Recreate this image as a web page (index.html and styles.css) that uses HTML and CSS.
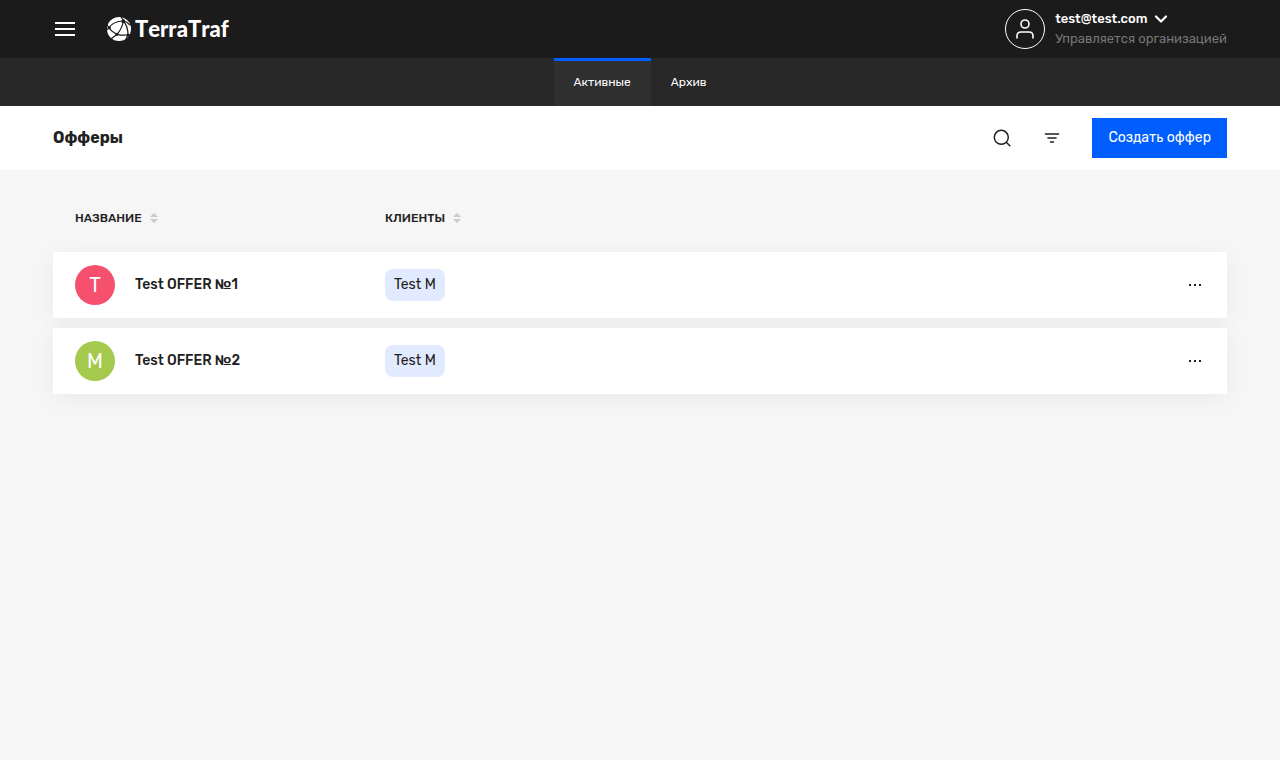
FILE: index.html
```html
<!DOCTYPE html>
<html lang="ru">
<head>
<meta charset="utf-8">
<meta name="viewport" content="width=device-width, initial-scale=1">
<title>Офферы — TerraTraf</title>
<link rel="stylesheet" href="styles.css">
</head>
<body>
<header class="topbar">
  <div class="brand">
    <button class="icon-btn" type="button" aria-label="Меню">
      <svg width="24" height="24" viewBox="0 0 24 24" fill="currentColor"><path d="M2 5h20v2H2zM2 11h20v2H2zM2 17h20v2H2z"/></svg>
    </button>
    <a class="logo" href="#">
      <svg width="24" height="24" viewBox="0 0 24 24" aria-hidden="true">
        <circle cx="12" cy="12" r="12" fill="#fff"/>
        <g fill="none" stroke="#1b1b1b" stroke-width="1.2">
          <path d="M14 0Q16 2 16.300 4Q6 4.500 2 10.500L0 13"/>
          <path d="M2 10.500Q4 14.500 10 17.300Q16 19 24 17.500"/>
          <path d="M2 10.500L0 8"/>
          <path d="M16.300 4Q15 12 10 17.300L4 22"/>
          <path d="M16.300 4Q21 9 21 18L19 22"/>
          <path d="M16.300 4Q20 4.500 23 8"/>
        </g>
        <g fill="#1b1b1b"><circle cx="16.300" cy="4.200" r="1.900"/><circle cx="2.200" cy="10.700" r="1.600"/><circle cx="10" cy="17.300" r="1.500"/><circle cx="21" cy="18" r="1.500"/></g>
      </svg>
      <span>TerraTraf</span>
    </a>
  </div>
  <button class="account" type="button">
    <span class="account-avatar">
      <svg width="24" height="24" viewBox="0 0 24 24" fill="none" stroke="currentColor" stroke-width="1.600" stroke-linecap="round"><circle cx="12" cy="7" r="4"/><path d="M4 21v-2q0-4 4-4h8q4 0 4 4v2"/></svg>
    </span>
    <span class="account-text">
      <span class="account-mail">test@test.com
        <svg width="14" height="8" viewBox="0 0 14 8" fill="none" stroke="currentColor" stroke-width="2.200" stroke-linecap="round" stroke-linejoin="round"><path d="M2 1.500l5 5 5-5"/></svg>
      </span>
      <span class="account-note">Управляется организацией</span>
    </span>
  </button>
</header>
<nav class="tabs">
  <a class="tab tab-active" href="#" aria-current="page">Активные</a>
  <a class="tab" href="#">Архив</a>
</nav>
<section class="toolbar">
  <h1>Офферы</h1>
  <div class="actions">
    <button class="icon-btn" type="button" aria-label="Поиск">
      <svg width="24" height="24" viewBox="0 0 24 24" fill="none" stroke="currentColor" stroke-width="1.500"><circle cx="11.300" cy="11.300" r="7"/><path d="M16.300 16.300l4 4"/></svg>
    </button>
    <button class="icon-btn" type="button" aria-label="Фильтр">
      <svg width="24" height="24" viewBox="0 0 24 24" fill="none" stroke="currentColor" stroke-width="1.600" stroke-linecap="round"><path d="M5.500 8h13M8 12h8M10.500 16h3"/></svg>
    </button>
    <button class="create" type="button">Создать оффер</button>
  </div>
</section>
<main>
  <table class="offers">
    <thead>
      <tr>
        <th class="col-name" scope="col"><button class="sort" type="button">НАЗВАНИЕ <svg width="8" height="10" viewBox="0 0 8 10" fill="#ccc"><path d="M0 4L3.500.300h1L8 4zM0 6h8L4.500 9.700h-1z"/></svg></button></th>
        <th scope="col"><button class="sort" type="button">КЛИЕНТЫ <svg width="8" height="10" viewBox="0 0 8 10" fill="#ccc"><path d="M0 4L3.500.300h1L8 4zM0 6h8L4.500 9.700h-1z"/></svg></button></th>
        <td class="col-more"></td>
      </tr>
    </thead>
    <tbody>
      <tr>
        <td><div class="offer"><span class="avatar avatar-red">T</span><span>Test OFFER №1</span></div></td>
        <td><span class="chip">Test M</span></td>
        <td class="col-more"><button class="icon-btn" type="button" aria-label="Действия"><svg width="24" height="24" viewBox="0 0 24 24" fill="currentColor"><path d="M6 11h2v2H6zM11 11h2v2h-2zM16 11h2v2h-2z"/></svg></button></td>
      </tr>
      <tr>
        <td><div class="offer"><span class="avatar avatar-green">M</span><span>Test OFFER №2</span></div></td>
        <td><span class="chip">Test M</span></td>
        <td class="col-more"><button class="icon-btn" type="button" aria-label="Действия"><svg width="24" height="24" viewBox="0 0 24 24" fill="currentColor"><path d="M6 11h2v2H6zM11 11h2v2h-2zM16 11h2v2h-2z"/></svg></button></td>
      </tr>
    </tbody>
  </table>
</main>
</body>
</html>
```
FILE: styles.css
```css
* { box-sizing: border-box; }
body {
  margin: 0;
  background: #f6f6f6;
  color: #212121;
  font-family: Rubik, Roboto, sans-serif;
  font-size: 14px;
  line-height: 20px;
}
button { margin: 0; padding: 0; border: 0; background: none; color: inherit; font: inherit; cursor: pointer; }
a { color: inherit; text-decoration: none; }
svg { display: block; flex: none; }
.icon-btn { display: flex; }

.topbar {
  display: flex;
  align-items: center;
  justify-content: space-between;
  min-height: 58px;
  padding: 0 53px;
  background: #1b1b1b;
  color: #fff;
}
.brand { display: flex; align-items: center; gap: 30px; }
.logo {
  display: flex;
  align-items: center;
  gap: 4px;
  font: 900 22px/24px Lato, sans-serif;
  font-kerning: none;
}
.account { display: flex; align-items: center; gap: 10px; text-align: left; font-size: 13px; }
.account-avatar {
  display: flex;
  align-items: center;
  justify-content: center;
  width: 40px;
  height: 40px;
  border: 1px solid #fff;
  border-radius: 50%;
}
.account-text { display: flex; flex-direction: column; }
.account-mail { display: flex; align-items: center; gap: 7px; font-weight: 500; }
.account-note { color: #777; }

.tabs { display: flex; justify-content: center; min-height: 48px; background: #282828; color: #fff; font-size: 12px; }
.tab { display: flex; align-items: center; padding: 0 20px 3px; border-top: 3px solid transparent; }
.tab-active { border-top-color: #005eff; background: #2f2f2f; }

.toolbar {
  display: flex;
  align-items: center;
  justify-content: space-between;
  min-height: 64px;
  padding: 12px 53px;
  background: #fff;
}
h1 { margin: 0; font-size: 16px; font-weight: 700; }
.actions { display: flex; align-items: center; gap: 26px; }
.create { height: 40px; margin-left: 2px; padding: 0 16px; background: #005eff; color: #fff; }

main { padding: 14px 53px; }
.offers { width: 100%; border-spacing: 0 10px; table-layout: fixed; }
.offers th, .offers td { padding: 0 0 0 22px; text-align: left; }
.offers thead th { height: 48px; }
.offers .col-name { width: 310px; }
.offers .col-more { width: 66px; padding: 0 20px 0 22px; }
.sort { display: flex; align-items: center; gap: 8px; font-size: 12px; font-weight: 500; }
.offers tbody tr { box-shadow: 0 4px 24px rgba(0, 0, 0, .05); }
.offers tbody td { position: relative; z-index: 1; height: 66px; background: #fff; line-height: 22px; }
.offer { display: flex; align-items: center; gap: 20px; font-weight: 500; }
.avatar {
  display: flex;
  align-items: center;
  justify-content: center;
  width: 40px;
  height: 40px;
  border-radius: 50%;
  color: #fff;
  font-size: 20px;
  font-weight: 400;
}
.avatar-red { background: #f6506f; }
.avatar-green { background: #a5c94c; }
.chip { display: inline-block; padding: 5px 9px; border-radius: 8px; background: #e2eaff; }
```
